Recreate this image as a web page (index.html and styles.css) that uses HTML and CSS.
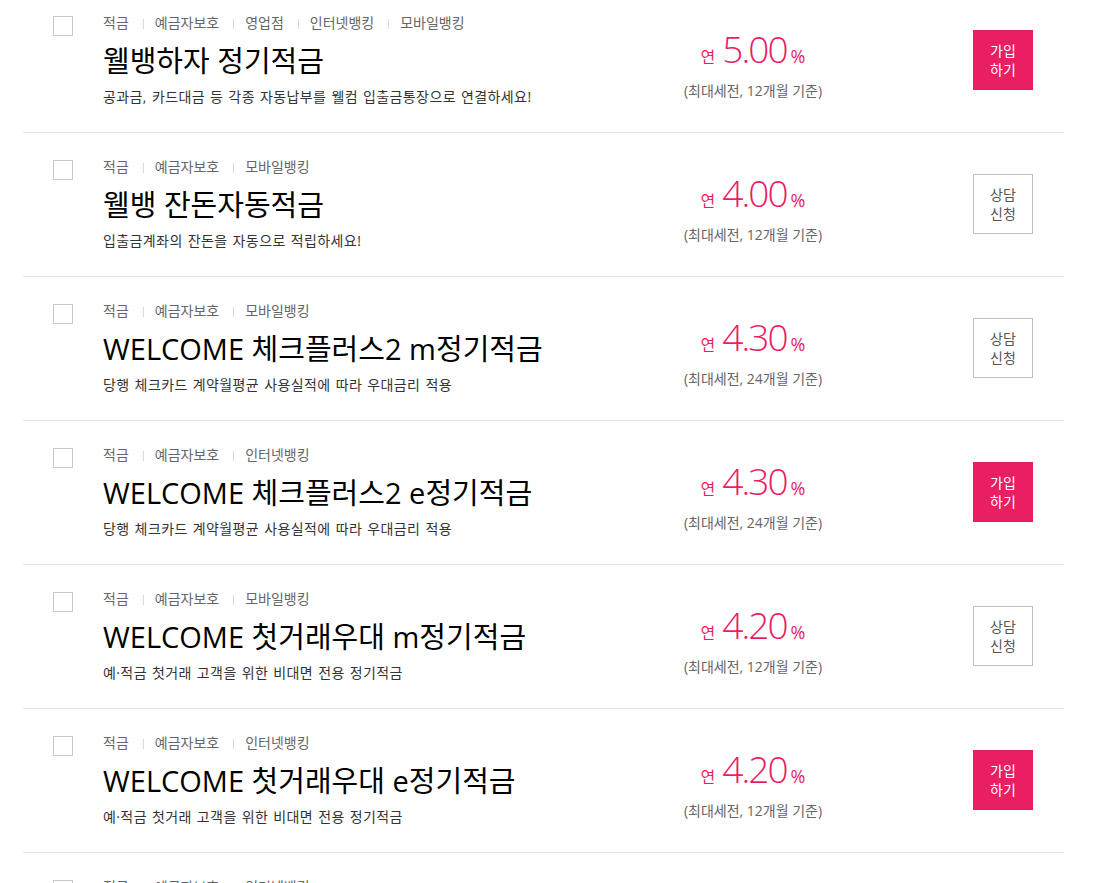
FILE: index.html
```html
<!DOCTYPE html>
<html lang="ko">
<head>
<meta charset="utf-8">
<title>적금 상품 목록</title>
<link rel="stylesheet" href="styles.css">
</head>
<body>
<ul class="list">
  <li class="item">
    <span class="check"></span>
    <div class="info">
      <div class="tags"><span>적금</span><span>예금자보호</span><span>영업점</span><span>인터넷뱅킹</span><span>모바일뱅킹</span></div>
      <div class="title">웰뱅하자 정기적금</div>
      <div class="desc">공과금, 카드대금 등 각종 자동납부를 웰컴 입출금통장으로 연결하세요!</div>
    </div>
    <div class="rate">
      <div class="rate-line"><span class="pre">연</span><span class="num">5.00</span><span class="pct">%</span></div>
      <div class="note">(최대세전, 12개월 기준)</div>
    </div>
    <a class="btn btn-join">가입<br>하기</a>
  </li>
  <li class="item">
    <span class="check"></span>
    <div class="info">
      <div class="tags"><span>적금</span><span>예금자보호</span><span>모바일뱅킹</span></div>
      <div class="title">웰뱅 잔돈자동적금</div>
      <div class="desc">입출금계좌의 잔돈을 자동으로 적립하세요!</div>
    </div>
    <div class="rate">
      <div class="rate-line"><span class="pre">연</span><span class="num">4.00</span><span class="pct">%</span></div>
      <div class="note">(최대세전, 12개월 기준)</div>
    </div>
    <a class="btn btn-consult">상담<br>신청</a>
  </li>
  <li class="item">
    <span class="check"></span>
    <div class="info">
      <div class="tags"><span>적금</span><span>예금자보호</span><span>모바일뱅킹</span></div>
      <div class="title">WELCOME 체크플러스2 m정기적금</div>
      <div class="desc">당행 체크카드 계약월평균 사용실적에 따라 우대금리 적용</div>
    </div>
    <div class="rate">
      <div class="rate-line"><span class="pre">연</span><span class="num">4.30</span><span class="pct">%</span></div>
      <div class="note">(최대세전, 24개월 기준)</div>
    </div>
    <a class="btn btn-consult">상담<br>신청</a>
  </li>
  <li class="item">
    <span class="check"></span>
    <div class="info">
      <div class="tags"><span>적금</span><span>예금자보호</span><span>인터넷뱅킹</span></div>
      <div class="title">WELCOME 체크플러스2 e정기적금</div>
      <div class="desc">당행 체크카드 계약월평균 사용실적에 따라 우대금리 적용</div>
    </div>
    <div class="rate">
      <div class="rate-line"><span class="pre">연</span><span class="num">4.30</span><span class="pct">%</span></div>
      <div class="note">(최대세전, 24개월 기준)</div>
    </div>
    <a class="btn btn-join">가입<br>하기</a>
  </li>
  <li class="item">
    <span class="check"></span>
    <div class="info">
      <div class="tags"><span>적금</span><span>예금자보호</span><span>모바일뱅킹</span></div>
      <div class="title">WELCOME 첫거래우대 m정기적금</div>
      <div class="desc">예·적금 첫거래 고객을 위한 비대면 전용 정기적금</div>
    </div>
    <div class="rate">
      <div class="rate-line"><span class="pre">연</span><span class="num">4.20</span><span class="pct">%</span></div>
      <div class="note">(최대세전, 12개월 기준)</div>
    </div>
    <a class="btn btn-consult">상담<br>신청</a>
  </li>
  <li class="item">
    <span class="check"></span>
    <div class="info">
      <div class="tags"><span>적금</span><span>예금자보호</span><span>인터넷뱅킹</span></div>
      <div class="title">WELCOME 첫거래우대 e정기적금</div>
      <div class="desc">예·적금 첫거래 고객을 위한 비대면 전용 정기적금</div>
    </div>
    <div class="rate">
      <div class="rate-line"><span class="pre">연</span><span class="num">4.20</span><span class="pct">%</span></div>
      <div class="note">(최대세전, 12개월 기준)</div>
    </div>
    <a class="btn btn-join">가입<br>하기</a>
  </li>
  <li class="item">
    <span class="check"></span>
    <div class="info">
      <div class="tags"><span>적금</span><span>예금자보호</span><span>인터넷뱅킹</span></div>
      <div class="title">WELCOME 정기적금</div>
      <div class="desc">비대면 전용 정기적금</div>
    </div>
    <div class="rate">
      <div class="rate-line"><span class="pre">연</span><span class="num">4.00</span><span class="pct">%</span></div>
      <div class="note">(최대세전, 12개월 기준)</div>
    </div>
    <a class="btn btn-join">가입<br>하기</a>
  </li>
</ul>
</body>
</html>
```

FILE: styles.css
```css
html, body {
  margin: 0;
  padding: 0;
  background: #fff;
}
body {
  font-family: "Open Sans", "Noto Sans CJK KR", sans-serif;
  color: #111;
  overflow: hidden;
}
.list {
  list-style: none;
  margin: -11px 0 0 23px;
  padding: 0;
  width: 1040px;
}
.item {
  display: flex;
  align-items: flex-start;
  height: 143px;
  border-bottom: 1px solid #e2e2e2;
}
.check {
  flex: none;
  box-sizing: border-box;
  width: 20px;
  height: 20px;
  margin: 27px 0 0 30px;
  border: 1px solid #c8c8c8;
  background: #fff;
}
.info {
  flex: none;
  width: 560px;
  margin-left: 30px;
  padding-top: 24px;
}
.tags {
  display: flex;
  align-items: center;
  height: 20px;
  font-size: 14px;
  line-height: 20px;
  color: #666;
}
.tags span + span::before {
  content: "";
  display: inline-block;
  width: 1px;
  height: 10px;
  margin: 0 11px 0 14px;
  background: #d8d8d8;
  vertical-align: -1px;
}
.title {
  margin-top: 9px;
  font-size: 29px;
  line-height: 38px;
  color: #000;
  white-space: nowrap;
}
.desc {
  margin-top: 7px;
  font-size: 14px;
  line-height: 20px;
  color: #333;
  letter-spacing: 0.4px;
  word-spacing: 1px;
}
.rate {
  flex: none;
  width: 240px;
  margin-left: -30px;
  padding-top: 37px;
  text-align: center;
  color: #e91e63;
}
.rate-line {
  height: 46px;
  line-height: 46px;
  white-space: nowrap;
}
.pre {
  font-size: 16px;
  margin-right: 7px;
}
.num {
  font-size: 37px;
  font-weight: 300;
  letter-spacing: -2px;
}
.pct {
  font-size: 18px;
  margin-left: 4px;
}
.note {
  margin-top: 9px;
  font-size: 14px;
  line-height: 20px;
  color: #666;
}
.btn {
  flex: none;
  box-sizing: border-box;
  display: flex;
  align-items: center;
  justify-content: center;
  width: 60px;
  height: 60px;
  margin: 41px 30px 0 auto;
  font-size: 14px;
  line-height: 19px;
  text-align: center;
  text-decoration: none;
}
.btn-join {
  background: #e91e63;
  color: #fff;
}
.btn-consult {
  border: 1px solid #bdbdbd;
  color: #555;
  background: #fff;
}
```
